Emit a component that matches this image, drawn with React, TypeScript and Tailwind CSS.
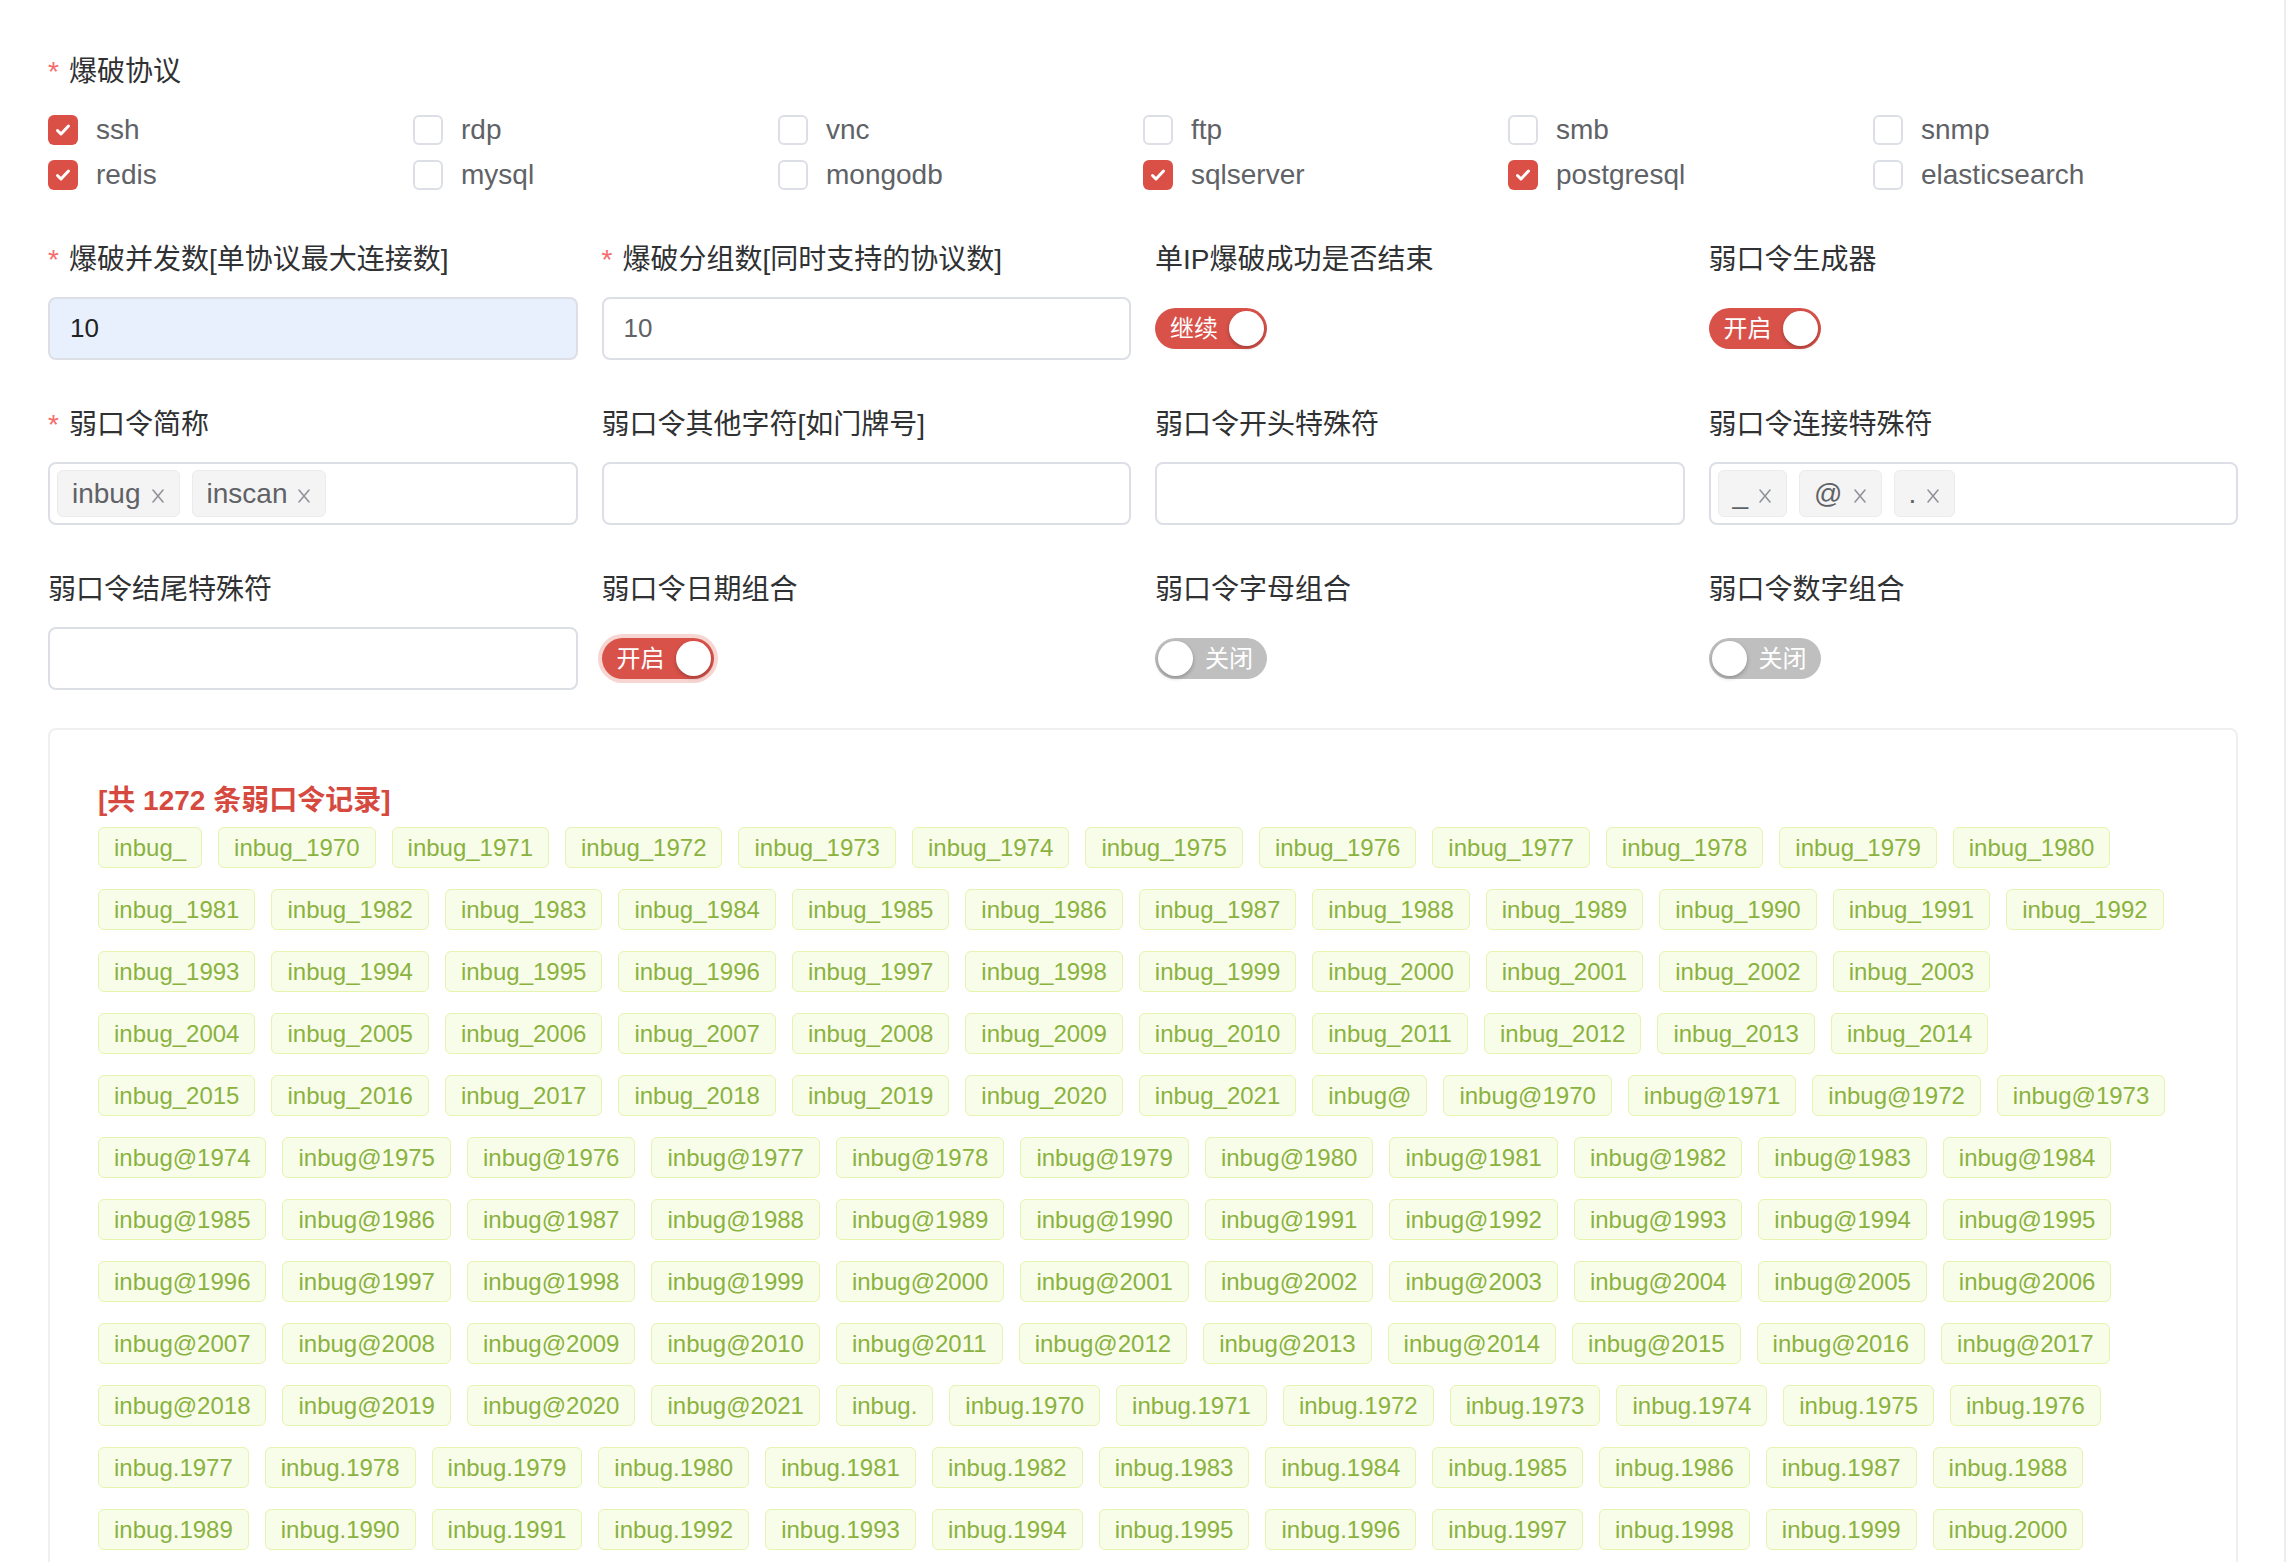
import React from 'react';

const protocols = [
  { name: 'ssh', checked: true },
  { name: 'rdp', checked: false },
  { name: 'vnc', checked: false },
  { name: 'ftp', checked: false },
  { name: 'smb', checked: false },
  { name: 'snmp', checked: false },
  { name: 'redis', checked: true },
  { name: 'mysql', checked: false },
  { name: 'mongodb', checked: false },
  { name: 'sqlserver', checked: true },
  { name: 'postgresql', checked: true },
  { name: 'elasticsearch', checked: false },
];

// weak password list, same order as generator output
const passwords: string[] = [];
['inbug', 'inscan'].forEach(name => {
  ['_', '@', '.'].forEach(sep => {
    passwords.push(`${name}${sep}`);
    for (let y = 1970; y <= 2021; y++) passwords.push(`${name}${sep}${y}`);
  });
});

// how many tags land on each wrapped line (only the lines in view)
const rowSizes = [12, 12, 11, 11, 12, 11, 11, 11, 11, 12, 12, 12];
const rows: string[][] = [];
let cursor = 0;
rowSizes.forEach(n => {
  rows.push(passwords.slice(cursor, cursor + n));
  cursor += n;
});

function Label({ text, required }: { text: string; required?: boolean }) {
  return (
    <div className="flex h-[56px] items-center pt-[6px] text-[28px] text-[#303133]">
      {required && <span className="mr-[10px] text-[#f56c6c]">*</span>}
      {text}
    </div>
  );
}

function Checkbox({ name, checked }: { name: string; checked: boolean }) {
  return (
    <div className="flex h-[45px] items-center gap-[18px]">
      {checked ? (
        <span className="flex h-[30px] w-[30px] items-center justify-center rounded-[6px] bg-[#da5046]">
          <svg width="18" height="18" viewBox="0 0 18 18" fill="none">
            <path d="M3.5 9.5l3.5 3.5 7.5-8" stroke="white" strokeWidth="3" strokeLinecap="round" strokeLinejoin="round" />
          </svg>
        </span>
      ) : (
        <span className="h-[30px] w-[30px] rounded-[6px] border-2 border-[#dcdfe6] bg-white" />
      )}
      <span className="text-[28px] text-[#5f6266]">{name}</span>
    </div>
  );
}

function Input({ value, autofill }: { value?: string; autofill?: boolean }) {
  return (
    <div className={`flex h-[63px] items-center rounded-[8px] border-2 border-[#dcdfe6] px-[20px] text-[26px] ${autofill ? 'bg-[#e8f0fe] text-[#222]' : 'bg-white text-[#606266]'}`}>
      {value}
    </div>
  );
}

function CloseIcon() {
  return (
    <svg width="14" height="16" viewBox="0 0 14 16" fill="none" className="mt-[4px]">
      <path d="M2 2l10 12M12 2L2 14" stroke="#909399" strokeWidth="1.6" strokeLinecap="round" />
    </svg>
  );
}

function TagInput({ tags }: { tags: string[] }) {
  return (
    <div className="flex h-[63px] items-center gap-[12px] rounded-[8px] border-2 border-[#dcdfe6] bg-white pl-[7px]">
      {tags.map(t => (
        <span key={t} className="flex h-[47px] items-center gap-[10px] rounded-[6px] border border-[#ebebed] bg-[#f4f4f5] px-[14px] text-[28px] text-[#606266]">
          {t}
          <CloseIcon />
        </span>
      ))}
    </div>
  );
}

function Switch({ on, text, focused }: { on: boolean; text: string; focused?: boolean }) {
  if (on) {
    return (
      <div className={`flex h-[41px] w-[112px] items-center justify-between rounded-full bg-[#d9524a] pl-[15px] pr-[3px] ${focused ? 'ring-[4px] ring-[#f7d6d2]' : ''}`}>
        <span className="text-[24px] leading-none text-white">{text}</span>
        <span className="h-[35px] w-[35px] rounded-full bg-white shadow-[0_2px_4px_rgba(0,0,0,0.25)]" />
      </div>
    );
  }
  return (
    <div className="flex h-[41px] w-[112px] items-center justify-between rounded-full bg-[#bfbfbf] pl-[3px] pr-[14px]">
      <span className="h-[35px] w-[35px] rounded-full bg-white shadow-[0_2px_4px_rgba(0,0,0,0.25)]" />
      <span className="text-[24px] leading-none text-white">{text}</span>
    </div>
  );
}

function Field({ label, required, children }: { label: string; required?: boolean; children: React.ReactNode }) {
  return (
    <div>
      <Label text={label} required={required} />
      <div className="mt-[12px] flex h-[63px] flex-col justify-center">{children}</div>
    </div>
  );
}

export default function App() {
  return (
    <div className="h-[1562px] w-full overflow-hidden bg-white font-['Liberation_Sans','Noto_Sans_CJK_SC',sans-serif]">
      <div className="h-full w-[2286px] border-r-2 border-[#ededed] pl-[48px] pr-[46px] pt-[41px]">
        <Label text="爆破协议" required />
        <div className="mt-[10px] grid grid-cols-6">
          {protocols.map(p => (
            <Checkbox key={p.name} name={p.name} checked={p.checked} />
          ))}
        </div>

        <div className="mt-[32px] grid grid-cols-4 gap-x-[24px] gap-y-[34px]">
          <Field label="爆破并发数[单协议最大连接数]" required>
            <Input value="10" autofill />
          </Field>
          <Field label="爆破分组数[同时支持的协议数]" required>
            <Input value="10" />
          </Field>
          <Field label="单IP爆破成功是否结束">
            <Switch on text="继续" />
          </Field>
          <Field label="弱口令生成器">
            <Switch on text="开启" />
          </Field>

          <Field label="弱口令简称" required>
            <TagInput tags={['inbug', 'inscan']} />
          </Field>
          <Field label="弱口令其他字符[如门牌号]">
            <Input />
          </Field>
          <Field label="弱口令开头特殊符">
            <Input />
          </Field>
          <Field label="弱口令连接特殊符">
            <TagInput tags={['_', '@', '.']} />
          </Field>

          <Field label="弱口令结尾特殊符">
            <Input />
          </Field>
          <Field label="弱口令日期组合">
            <Switch on text="开启" focused />
          </Field>
          <Field label="弱口令字母组合">
            <Switch on={false} text="关闭" />
          </Field>
          <Field label="弱口令数字组合">
            <Switch on={false} text="关闭" />
          </Field>
        </div>

        <div className="mt-[38px] rounded-[8px] border-2 border-[#efeff2] pb-[40px] pl-[48px] pr-[48px] pt-[51px]">
          <div className="text-[28px] font-bold leading-[40px] text-[#d6493f]">[共 1272 条弱口令记录]</div>
          <div className="mt-[6px] flex flex-col gap-[21px]">
            {rows.map((row, i) => (
              <div key={i} className="flex gap-[16px]">
                {row.map(p => (
                  <span key={p} className="flex h-[41px] items-center whitespace-nowrap rounded-[6px] border border-[#e5f4ae] bg-[#f8fde9] px-[15px] text-[24px] text-[#8ab240]">
                    {p}
                  </span>
                ))}
              </div>
            ))}
          </div>
        </div>
      </div>
    </div>
  );
}
